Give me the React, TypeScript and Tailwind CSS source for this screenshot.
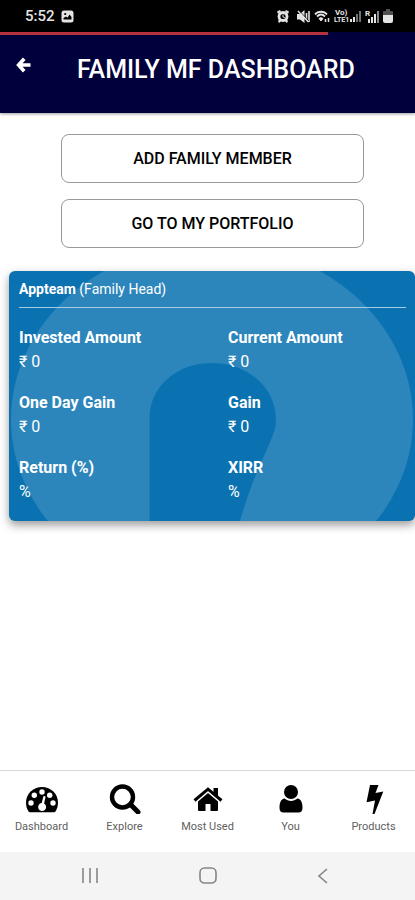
import type { ReactNode } from "react";

const stats = [
  { label: "Invested Amount", value: "₹ 0" },
  { label: "Current Amount", value: "₹ 0" },
  { label: "One Day Gain", value: "₹ 0" },
  { label: "Gain", value: "₹ 0" },
  { label: "Return (%)", value: "%" },
  { label: "XIRR", value: "%" },
];

function StatusBar() {
  return (
    <div className="flex h-8 items-center justify-between bg-black pr-[22px] pl-[25px] text-[#e4e4e4]">
      <div className="flex items-center gap-[6px]">
        <span className="text-[15px] leading-5 font-medium">5:52</span>
        <svg width="13" height="13" viewBox="0 0 13 13" aria-hidden="true">
          <rect x="0.5" y="0.5" width="12" height="12" rx="2.5" fill="currentColor" />
          <path d="M2.5 9.5V8l2.5-1.5 1.5 1.3 2-3.3 2 2.5v2.5z" fill="#000" />
          <circle cx="4.2" cy="4" r="1.1" fill="#000" />
        </svg>
      </div>
      <div className="flex items-center gap-1">
        <svg width="12" height="13" viewBox="0 0 12 13" fill="currentColor" aria-hidden="true">
          <path d="M0 1.5 3 0l1 1.5L1 4zM12 1.5 9 0 8 1.5 11 4zM1 11l1.5-2 2 2L2 13zM11 11 9.5 9l-2 2L10 13z" />
          <circle cx="6" cy="6.5" r="5.4" />
          <circle cx="6" cy="6.500" r="2.600" fill="#000" />
          <path d="M5.500 4.500h1v2l1.500 1-.5.8-2-1.300z" />
        </svg>
        <svg className="ml-1" width="13" height="13" viewBox="0 0 13 13" fill="currentColor" aria-hidden="true">
          <path d="M0 4h3l4.500-4v13L3 9.500H0z" />
          <path d="M9.500 3v7M12 1v11M1 1l10.500 11" stroke="currentColor" strokeWidth="1.600" fill="none" />
          <path d="M2.500.8 12 11" stroke="#000" strokeWidth=".7" />
        </svg>
        <svg width="16" height="13" viewBox="0 0 16 13" fill="none" stroke="currentColor" aria-hidden="true">
          <path d="M1 4.500C4 .8 10 .8 13 4.500M3 6.500c2.500-2.500 5.500-2.500 8 0" strokeWidth="1.800" />
          <path d="M5 8.500c1.300-1 2.700-1 4 0L7 11z" fill="currentColor" />
          <path d="M11.500 9v3M14.500 8v4" strokeWidth="1.500" />
        </svg>
        <svg width="16" height="14" viewBox="0 0 16 14" fill="currentColor" aria-hidden="true">
          <text x="1" y="6" fontSize="8" fontWeight="700">Vo)</text>
          <text x="0" y="13" fontSize="7" fontWeight="700">LTE1</text>
        </svg>
        <svg className="-ml-1" width="11" height="12" viewBox="0 0 11 12" fill="currentColor" aria-hidden="true">
          <path d="M0 9h2v3H0zM3 7h2v5H3z" />
          <path d="M6 4h2v8H6zM9 1h2v11H9z" opacity=".5" />
        </svg>
        <svg width="14" height="13" viewBox="0 0 14 13" fill="currentColor" aria-hidden="true">
          <text x="0" y="6" fontSize="8" fontWeight="700">R</text>
          <path d="M3 9h2v4H3zM6 7h2v6H6zM9 4h2v9H9z" />
          <path d="M12 1h2v12h-2z" opacity=".6" />
        </svg>
        <svg width="10" height="14" viewBox="0 0 10 14" fill="currentColor" aria-hidden="true">
          <path d="M3 0h4v2h2q1 0 1 1v3H0V3q0-1 1-1h2z" opacity=".35" />
          <path d="M0 6h10v6q0 2-2 2H2q-2 0-2-2z" />
        </svg>
      </div>
    </div>
  );
}

function CardPattern() {
  return (
    <svg
      className="absolute inset-0 h-full w-full"
      viewBox="0 0 406 250"
      preserveAspectRatio="none"
      aria-hidden="true"
    >
      <ellipse cx="203" cy="148.5" rx="201" ry="176" fill="#2c86bc" />
      <path d="M140.500 250V147C141 115 168 92 203 92s64 24 64 57c0 10-4 17-8 27-11 24-20 46-28 74z" fill="#0b72b1" />
    </svg>
  );
}

function TabButton({ label, children }: { label: string; children: ReactNode }) {
  return (
    <button type="button" className="flex flex-1 flex-col items-center gap-[6px] pt-[13px] text-black">
      <svg width="34" height="30" viewBox="0 0 34 30" fill="currentColor" aria-hidden="true">
        {children}
      </svg>
      <span className="text-[11px] leading-[14px] whitespace-nowrap text-[#606060]">{label}</span>
    </button>
  );
}

export default function App() {
  return (
    <div className="flex min-h-screen flex-col bg-white font-[Roboto,sans-serif]">
      <StatusBar />
      <header className="bg-[#00003c] shadow-[0_1px_3px_rgba(0,0,0,0.4)]">
        <div className="h-[3px]">
          <div className="h-full w-[79%] bg-[#b5333f]" />
        </div>
        <div className="flex h-[78px] items-start">
          <button type="button" aria-label="Back" className="mt-[22px] ml-4 text-white">
            <svg width="15" height="16" viewBox="0 0 15 16" fill="none" stroke="currentColor" strokeWidth="3.600" aria-hidden="true">
              <path d="M8.200 1.800 2.600 8l5.600 6.200M3 8h11.500" />
            </svg>
          </button>
          <h1 className="mt-[19px] ml-[46px] text-[25px] leading-8 font-medium whitespace-nowrap text-white">
            FAMILY MF DASHBOARD
          </h1>
        </div>
      </header>

      <main className="flex-1">
        <div className="flex flex-col gap-4 px-[51px] pt-[21px] pl-[61px] text-base font-medium text-black">
          <button type="button" className="h-[49px] rounded-lg border border-[#999]">
            ADD FAMILY MEMBER
          </button>
          <button type="button" className="h-[49px] rounded-lg border border-[#999]">
            GO TO MY PORTFOLIO
          </button>
        </div>

        <section className="relative mt-[23px] ml-[9px] h-[250px] overflow-hidden rounded-md bg-[#0b72b1] px-[10px] text-white shadow-[0_4px_10px_rgba(0,0,0,0.4)]">
          <CardPattern />
          <div className="relative">
            <h2 className="mr-[-1px] border-b border-[#a6cde4] pt-2 pb-2 text-sm leading-5">
              <span className="font-bold">Appteam</span> (Family Head)
            </h2>
            <dl className="grid grid-cols-[209px_1fr] gap-y-[17px] pt-[18px] text-base leading-6">
              {stats.map((stat) => (
                <div key={stat.label}>
                  <dt className="font-bold">{stat.label}</dt>
                  <dd>{stat.value}</dd>
                </div>
              ))}
            </dl>
          </div>
        </section>
      </main>

      <nav className="flex h-[82px] items-start border-t border-[#d8d8d8] bg-white">
        <TabButton label="Dashboard">
          <path d="M17 3C8 3 1 10 1 18.500c0 3.500 1 6.500 2.500 9 .4.500.8.700 1.300.700h24.400c.5 0 .9-.2 1.300-.7 1.500-2.500 2.500-5.500 2.500-9C33 10 26 3 17 3z" />
          <g fill="#fff">
            <circle cx="6" cy="19" r="2.700" />
            <circle cx="9.300" cy="11.300" r="2.700" />
            <circle cx="17" cy="8" r="2.700" />
            <circle cx="24.700" cy="11.300" r="2.700" />
            <circle cx="28" cy="19" r="2.700" />
            <path d="M18.500 12 20.600 12.600l-1.500 7a4 4 0 1 1-2.400-.5z" />
          </g>
        </TabButton>
        <TabButton label="Explore">
          <circle cx="14.500" cy="13" r="10.500" fill="none" stroke="currentColor" strokeWidth="4.400" />
          <path d="m22.500 20.500 7.500 7.500" stroke="currentColor" strokeWidth="5" strokeLinecap="round" />
        </TabButton>
        <TabButton label="Most Used">
          <path d="M17 9 7 17.500V26q0 1 1 1h6.500v-7h5v7H26q1 0 1-1v-8.500z" />
          <path d="m3.500 16.500L17 5.200l13.500 11.300" fill="none" stroke="currentColor" strokeWidth="3" />
          <path d="M22.500 4H27v10l-4.500-4z" />
        </TabButton>
        <TabButton label="You">
          <circle cx="17" cy="8" r="7" />
          <path d="M10.500 14.500c4 3.300 9 3.300 13 0 3.500.5 5 4 5 9.500 0 3-1.600 4.500-4 4.500h-15c-2.400 0-4-1.500-4-4.500 0-5.500 1.500-9 5-9.500z" />
        </TabButton>
        <TabButton label="Products">
          <path d="M13 1h8.500L18.500 9l7.800-1.500L17.500 30h-2l2.500-13.500L9.500 18.300z" />
        </TabButton>
      </nav>

      <div className="flex h-12 items-center justify-between bg-[#f4f4f4] px-[82px] text-[#858585]">
        <button type="button" aria-label="Recent apps">
          <svg width="16" height="16" viewBox="0 0 16 16" stroke="currentColor" strokeWidth="1.600" aria-hidden="true">
            <path d="M1 0v15M8 0v15M15 0v15" />
          </svg>
        </button>
        <button type="button" aria-label="Home">
          <svg width="18" height="18" viewBox="0 0 18 18" fill="none" stroke="currentColor" strokeWidth="1.600" aria-hidden="true">
            <rect x="1" y="1" width="16" height="15" rx="4.500" />
          </svg>
        </button>
        <button type="button" aria-label="Back to previous app">
          <svg width="16" height="16" viewBox="0 0 16 16" fill="none" stroke="currentColor" strokeWidth="1.600" aria-hidden="true">
            <path d="M10 1 2 8l8 7" />
          </svg>
        </button>
      </div>
    </div>
  );
}
